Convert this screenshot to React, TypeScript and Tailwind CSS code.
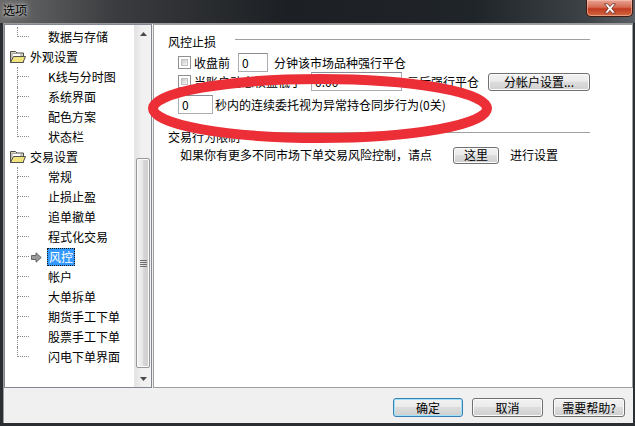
import React from "react";

const FONT = "font-['Noto_Sans_CJK_SC','Noto_Sans',sans-serif]";

function Folder() {
  return (
    <svg width="17" height="14" viewBox="0 0 17 14">
      <path d="M1.5 1.5h5l1.5 1.5h6.5v9.5h-13z" fill="#dcd7bd" stroke="#4d4d4d" />
      <path d="M3 3.5h9v8H3z" fill="#ffffff" stroke="#a0a0a0" />
      <path d="M4.5 6.5h12l-2.5 6H1.5z" fill="#f2e47c" stroke="#505050" />
    </svg>
  );
}

function Arrow() {
  return (
    <svg width="11" height="11" viewBox="0 0 11 11">
      <path d="M0.5 3.5h4.5V0.8L10.2 5.5 5 10.2V7.5H0.5z" fill="#9a9a9a" stroke="#5a5a5a" strokeWidth="0.9" />
    </svg>
  );
}

type Row =
  | { kind: "folder"; text: string }
  | { kind: "child"; text: string; last?: boolean; selected?: boolean };

const rows: Row[] = [
  { kind: "child", text: "数据与存储", last: true },
  { kind: "folder", text: "外观设置" },
  { kind: "child", text: "K线与分时图" },
  { kind: "child", text: "系统界面" },
  { kind: "child", text: "配色方案" },
  { kind: "child", text: "状态栏", last: true },
  { kind: "folder", text: "交易设置" },
  { kind: "child", text: "常规" },
  { kind: "child", text: "止损止盈" },
  { kind: "child", text: "追单撤单" },
  { kind: "child", text: "程式化交易" },
  { kind: "child", text: "风控", selected: true },
  { kind: "child", text: "帐户" },
  { kind: "child", text: "大单拆单" },
  { kind: "child", text: "期货手工下单" },
  { kind: "child", text: "股票手工下单" },
  { kind: "child", text: "闪电下单界面", last: true },
];

function TreeRow({ row }: { row: Row }) {
  if (row.kind === "folder") {
    return (
      <div className="h-[20px] flex items-center pl-[4px]">
        <Folder />
        <span className="ml-[4px] leading-[14px]">{row.text}</span>
      </div>
    );
  }
  return (
    <div className="h-[20px] flex items-stretch pl-[12px]">
      <div className="w-[12px] flex flex-col">
        <div className="h-[10px] border-l border-b border-dotted border-[#8a8a8a]" />
        <div className={"h-[10px] " + (row.last ? "" : "border-l border-dotted border-[#8a8a8a]")} />
      </div>
      <div className="w-[18px] flex items-center pl-[2px]">{row.selected ? <Arrow /> : null}</div>
      {row.selected ? (
        <div className="flex items-center">
          <span className="h-[18px] px-[1px] flex items-center bg-[#3399ff] text-white border border-dotted border-[#1a1a1a] leading-[14px]">
            {row.text}
          </span>
        </div>
      ) : (
        <div className="flex items-center pl-[1px]">
          <span className="leading-[14px]">{row.text}</span>
        </div>
      )}
    </div>
  );
}

function Scrollbar() {
  return (
    <div className="w-[17px] flex flex-col bg-[linear-gradient(90deg,#e3e3e3,#f0f0f0_40%,#f2f2f2)] border-l border-[#e6e6e6]">
      <div className="h-[17px] flex items-center justify-center">
        <svg width="7" height="4" viewBox="0 0 7 4"><path d="M0 4L3.5 0 7 4z" fill="#4a4a4a" /></svg>
      </div>
      <div className="h-[116px]" />
      <div className="h-[210px] mx-[1px] rounded-[2px] border border-[#979797] bg-[linear-gradient(90deg,#f4f4f4,#e8e8e8_45%,#d6d6d6_55%,#cfcfcf)] shadow-[inset_0_0_0_1px_#fbfbfb] flex flex-col items-center justify-center gap-[1px]">
        <div className="w-[7px] h-px bg-[#6f6f6f]" />
        <div className="w-[7px] h-px bg-[#6f6f6f]" />
        <div className="w-[7px] h-px bg-[#6f6f6f]" />
        <div className="w-[7px] h-px bg-[#6f6f6f]" />
      </div>
      <div className="h-[2px]" />
      <div className="h-[17px] flex items-center justify-center">
        <svg width="7" height="4" viewBox="0 0 7 4"><path d="M0 0L3.5 4 7 0z" fill="#4a4a4a" /></svg>
      </div>
    </div>
  );
}

function Btn({ children, w, h = 19, def = false }: { children: React.ReactNode; w: number; h?: number; def?: boolean }) {
  return (
    <div
      className={
        "flex items-center justify-center rounded-[3px] border leading-[14px] bg-[linear-gradient(#f2f2f2_0%,#ebebeb_45%,#dddddd_50%,#cfcfcf_100%)] " +
        (def
          ? "border-[#3c7fb1] shadow-[inset_0_0_0_1px_#9fe2fb]"
          : "border-[#707070] shadow-[inset_0_0_0_1px_#fbfbfb]")
      }
      style={{ width: w, height: h }}
    >
      {children}
    </div>
  );
}

function Check() {
  return (
    <div className="w-[13px] h-[13px] border border-[#8e8f8f] bg-white p-[2px] shrink-0">
      <div className="w-full h-full border border-[#c2c2c2] bg-[linear-gradient(135deg,#cbcbcb,#f6f6f6)]" />
    </div>
  );
}

function Field({ w, value }: { w: number; value: string }) {
  return (
    <div
      className="h-[19px] border border-[#abadb3] border-t-[#8a8c94] bg-white flex items-center pl-[3px] leading-[14px] shrink-0"
      style={{ width: w }}
    >
      {value}
    </div>
  );
}

export default function App() {
  return (
    <div className={"relative w-[635px] h-[426px] overflow-hidden bg-[#2b2f34] flex flex-col text-[12px] text-black " + FONT}>
      {/* title bar */}
      <div className="h-[23px] flex justify-between bg-[linear-gradient(90deg,#6a6a6a_0%,#3a3c3f_18%,#1c1f23_45%,#20252a_75%,#3d4247_92%,#5a5f65_100%)]">
        <div className="pl-[3px] pt-[3px] leading-[14px] text-black [text-shadow:0_0_6px_#d8d8d8,0_0_3px_#cfcfcf]">选项</div>
        <div className="pr-[2px]">
          <div className="w-[47px] h-[17px] rounded-b-[5px] border border-t-0 border-[#3f1b14] bg-[linear-gradient(#e8a595_0%,#d56a52_45%,#c13a20_55%,#d26a42_100%)] shadow-[inset_0_0_0_1px_rgba(255,200,185,0.55)] flex items-center justify-center">
            <svg width="14" height="11" viewBox="0 0 14 11">
              <path d="M1.5 0.8h3.2L7 3.6 9.3 0.8h3.2L8.8 5.5l3.7 4.7H9.3L7 7.4 4.7 10.2H1.5l3.7-4.7z" fill="#ffffff" stroke="#6a2a20" strokeWidth="0.8" />
            </svg>
          </div>
        </div>
      </div>

      {/* body */}
      <div className="ml-[3px] mr-[2px] h-[400px] bg-[#f0f0f0] border-l border-t border-[#9a9a9a] flex flex-col">
        <div className="h-[364px] flex">
          {/* tree */}
          <div className="w-[148px] h-full border border-[#828790] bg-white flex">
            <div className="flex-1 flex flex-col pt-[2px] overflow-hidden">
              {rows.map((r, i) => (
                <TreeRow key={i} row={r} />
              ))}
            </div>
            <Scrollbar />
          </div>
          <div className="w-[1px]" />
          {/* right panel */}
          <div className="w-[480px] h-full border border-[#a0a0a0] bg-white flex flex-col">
            <div className="mt-[9px] h-[16px] flex items-start pl-[14px] pr-[42px]">
              <span className="leading-[16px]">风控止损</span>
              <div className="ml-[19px] mt-[5px] flex-1 h-px bg-[#a0a0a0]" />
            </div>
            <div className="mt-[3px] h-[19px] flex items-center pl-[24px]">
              <Check />
              <span className="ml-[3px] leading-[14px]">收盘前</span>
              <div className="ml-[8px]"><Field w={30} value="0" /></div>
              <span className="ml-[6px] leading-[14px]">分钟该市场品种强行平仓</span>
            </div>
            <div className="h-[19px] flex items-center pl-[24px]">
              <Check />
              <span className="ml-[3px] leading-[14px]">当账户动态权益低于</span>
              <div className="ml-[9px]"><Field w={91} value="0.00" /></div>
              <span className="ml-[5px] leading-[14px]">元后强行平仓</span>
              <div className="ml-[9px]"><Btn w={102} h={18}>分帐户设置...</Btn></div>
            </div>
            <div className="mt-[4px] h-[19px] flex items-center pl-[24px]">
              <Field w={35} value="0" />
              <span className="ml-[2px] leading-[14px]">秒内的连续委托视为异常持仓同步行为(0关)</span>
            </div>
            <div className="mt-[15px] h-[16px] flex items-start pl-[14px] pr-[42px]">
              <span className="leading-[16px]">交易行为限制</span>
              <div className="ml-[28px] mt-[3px] flex-1 h-px bg-[#a0a0a0]" />
            </div>
            <div className="mt-[1px] h-[18px] flex items-center pl-[26px]">
              <span className="leading-[14px]">如果你有更多不同市场下单交易风险控制，请点</span>
              <div className="ml-[21px]"><Btn w={46} h={17}>这里</Btn></div>
              <span className="ml-[11px] leading-[14px]">进行设置</span>
            </div>
          </div>
        </div>
        {/* bottom buttons */}
        <div className="h-[35px] flex justify-end items-start pt-[10px] pr-[8px] gap-[9px]">
          <Btn w={70} def>确定</Btn>
          <Btn w={71}>取消</Btn>
          <div className="ml-[1px]"><Btn w={72}>需要帮助?</Btn></div>
        </div>
      </div>

      {/* red annotation ellipse */}
      <svg className="absolute left-[140px] top-[66px] pointer-events-none" width="360" height="86" viewBox="0 0 360 86">
        <ellipse cx="180" cy="42.5" rx="167" ry="29.5" fill="none" stroke="#ec2f36" strokeWidth="10" />
      </svg>
    </div>
  );
}
